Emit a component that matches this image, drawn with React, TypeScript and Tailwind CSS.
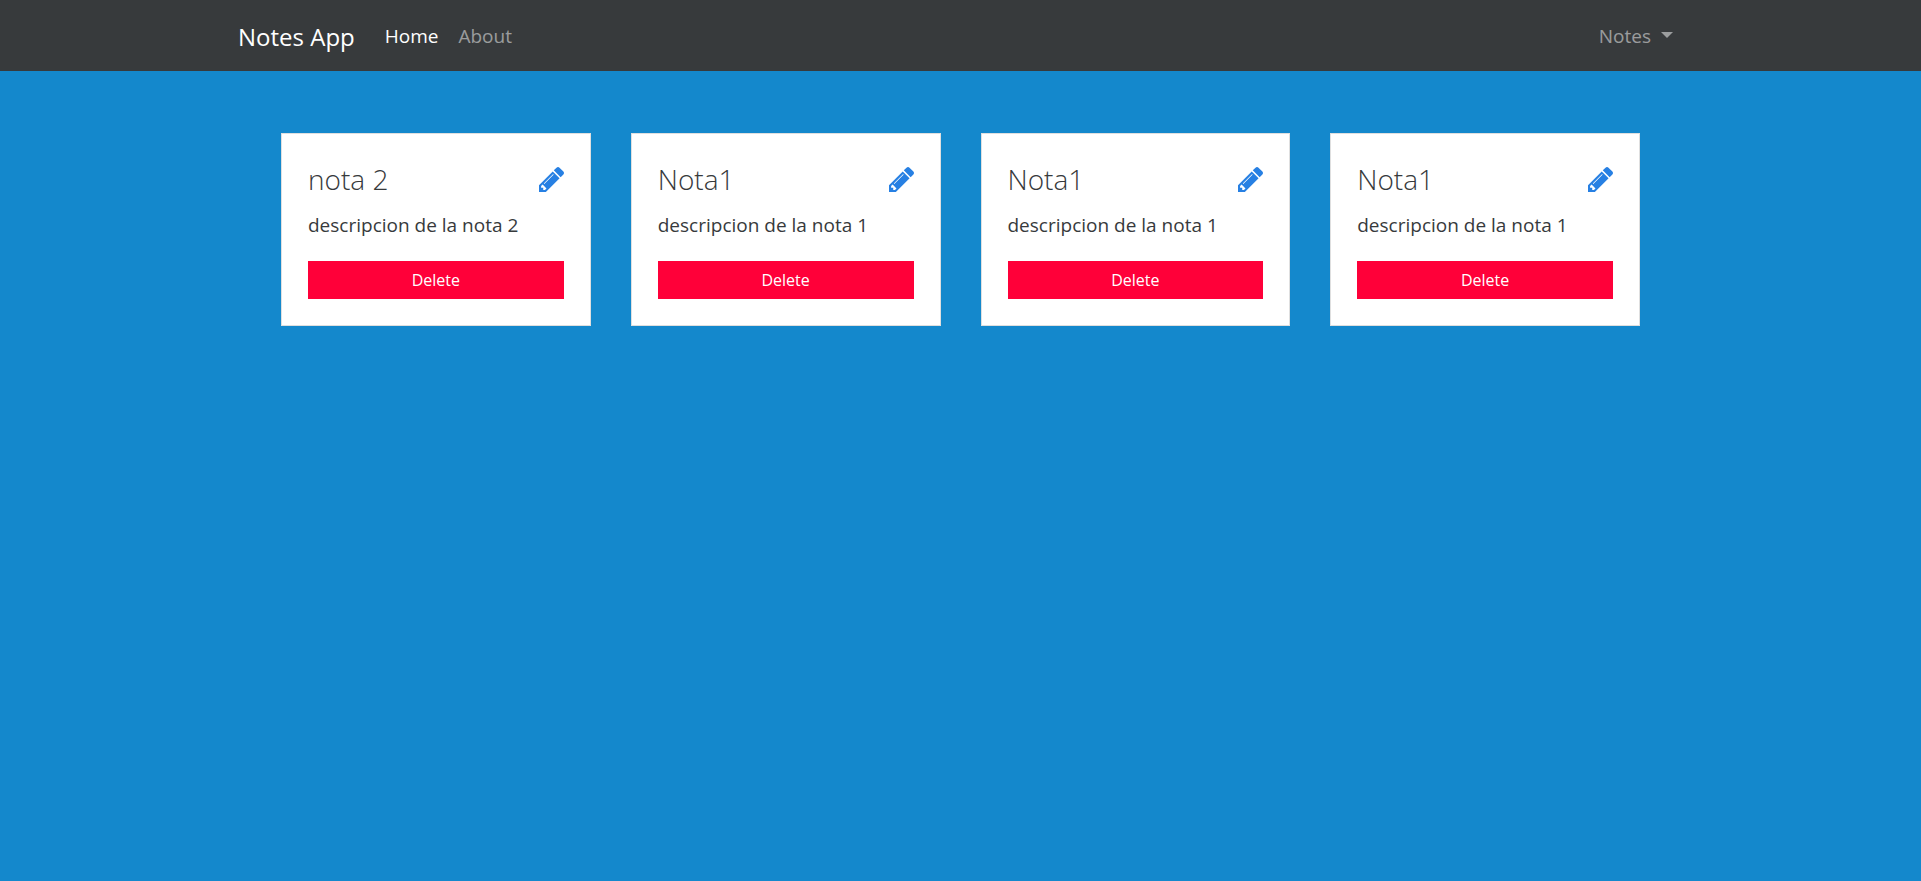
type Note = { id: number; title: string; description: string };

const notes: Note[] = [
  { id: 1, title: "nota 2", description: "descripcion de la nota 2" },
  { id: 2, title: "Nota1", description: "descripcion de la nota 1" },
  { id: 3, title: "Nota1", description: "descripcion de la nota 1" },
  { id: 4, title: "Nota1", description: "descripcion de la nota 1" },
];

function PencilIcon() {
  return (
    <svg viewBox="128 149 1515 1515" className="size-[25px]" fill="currentColor" aria-hidden="true">
      <path d="M491 1536l91-91-235-235-91 91v107h128v128h107zM1014 608q0-22-22-22-10 0-17 7l-542 542q-7 7-7 17 0 22 22 22 10 0 17-7l542-542q7-7 7-17zM960 416l416 416-832 832h-416v-416zM1643 512q0 53-37 90l-166 166-416-416 166-165q36-38 90-38 53 0 91 38l235 234q37 39 37 91z" />
    </svg>
  );
}

function NavBar() {
  return (
    <nav className="bg-[#373a3c]">
      <div className="mx-auto flex h-[71px] max-w-[1445px] items-center pt-0.5">
        <a href="#" className="text-2xl text-white">Notes App</a>
        <a href="#" className="ml-[30px] text-[19px] text-white">Home</a>
        <a href="#" className="ml-5 text-[19px] text-white/50">About</a>
        <button type="button" className="ml-auto mr-2.5 flex items-center gap-2.5 text-[19px] text-white/50">
          Notes
          <svg viewBox="0 0 12 6" className="mb-1 h-1.5 w-3" fill="currentColor" aria-hidden="true">
            <path d="M0 0h12L6 6z" />
          </svg>
        </button>
      </div>
    </nav>
  );
}

function NoteCard({ note }: { note: Note }) {
  return (
    <article className="border border-[#dfdfdf] bg-white p-[26px]">
      <header className="flex h-[38px] items-center justify-between">
        <h2 className="text-[28px] font-light">{note.title}</h2>
        <a href="#" aria-label="Edit note" className="text-[#2780e3]">
          <PencilIcon />
        </a>
      </header>
      <p className="mt-3 mb-[21px] text-[19px] leading-[30px]">{note.description}</p>
      <button type="button" className="flex h-[38px] w-full items-center justify-center bg-[#ff0039] text-base text-white">
        Delete
      </button>
    </article>
  );
}

export default function App() {
  return (
    <div className="min-h-screen bg-[#1488cc] font-['Open_Sans',sans-serif] text-[#373a3c]">
      <NavBar />
      <main className="mx-auto grid max-w-[1359px] grid-cols-4 gap-10 pt-[62px]">
        {notes.map((note) => (
          <NoteCard key={note.id} note={note} />
        ))}
      </main>
    </div>
  );
}
